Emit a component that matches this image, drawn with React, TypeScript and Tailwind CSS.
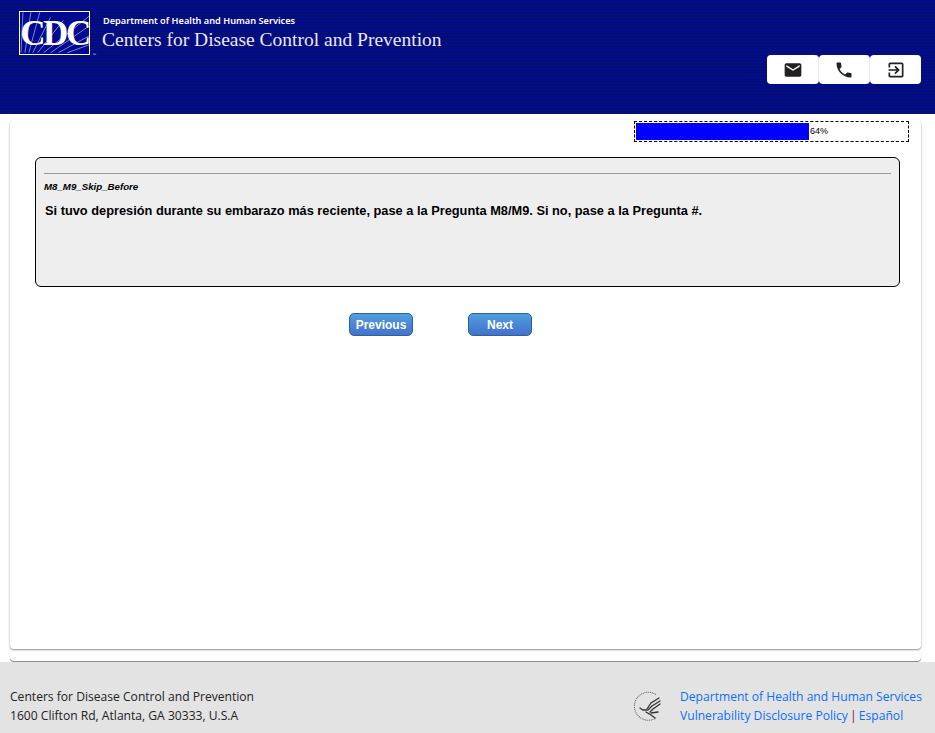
const rays = [
  'M1 41L3 0', 'M5 41L11 0', 'M9 41L20 0', 'M13 41L31 5', 'M18 41L44 8', 'M24 41L70 4', 'M31 41L70 14', 'M39 41L70 24', 'M48 41L70 33',
]

function CdcLogo() {
  return (
    <div className="relative h-[44px] w-[71px] shrink-0 border border-white bg-[#000a90]">
      <svg className="absolute inset-0 h-full w-full" viewBox="0 0 70 42" fill="none" stroke="#b4b8ec" strokeWidth="0.7">
        {rays.map((d) => (
          <path key={d} d={d} />
        ))}
      </svg>
      <span className="absolute inset-0 flex items-center justify-center font-['Liberation_Serif',serif] text-[35px] font-bold leading-none tracking-[-2.5px] text-white">
        CDC
      </span>
      <span className="absolute bottom-[-3px] right-[-7px] font-['Liberation_Sans',sans-serif] text-[4px] leading-none text-[#ccc]">™</span>
    </div>
  )
}

function HhsLogo() {
  return (
    <svg className="h-[32px] w-[32px] shrink-0" viewBox="0 0 32 32" fill="none">
      <path d="M24 4.500A14 14 0 1 0 24 28" stroke="#777" strokeWidth="1.100" strokeDasharray="1.100 0.700" />
      <g stroke="#333" strokeWidth="1.300" strokeLinecap="round">
        <path d="M27 8L19 13L15 19" />
        <path d="M28 11L20 16L16 20" />
        <path d="M28 14L21 19L18 22" />
        <path d="M8 18L11 20L15 20" />
        <path d="M14 22L19 25L23 28" />
        <path d="M19 23L26 22" />
      </g>
    </svg>
  )
}

export default function App() {
  return (
    <div className="flex h-[733px] flex-col overflow-hidden bg-white">
      {/* Header */}
      <header className="flex h-[114px] shrink-0 justify-between bg-[#000a84] bg-[repeating-linear-gradient(180deg,#000a8c_0px,#000a8c_2px,#0a1266_2px,#0a1266_3px)] pl-[19px] pr-[14px]">
        <div className="flex items-start pt-[11px]">
          <CdcLogo />
          <div className="ml-[13px] pt-[4px] text-white">
            <p className="font-['Noto_Sans',sans-serif] text-[9.2px] font-semibold leading-[12px]">Department of Health and Human Services</p>
            <p className="ml-[-1px] mt-[1px] font-['Liberation_Serif',serif] text-[19.5px] leading-[23px] text-[#e8e8f4]">Centers for Disease Control and Prevention</p>
          </div>
        </div>
        <div className="flex pt-[55px]">
          <div className="flex h-[29px]">
            <button className="flex w-[52px] items-center justify-center rounded-[4px] border-r border-[#e8e8e8] bg-white">
              <svg className="h-[20px] w-[20px] fill-[#212121]" viewBox="0 0 24 24">
                <path d="M20 4H4c-1.100 0-2 .9-2 2v12c0 1.100.9 2 2 2h16c1.100 0 2-.9 2-2V6c0-1.100-.9-2-2-2zm0 4l-8 5-8-5V6l8 5 8-5v2z" />
              </svg>
            </button>
            <button className="flex w-[51px] items-center justify-center rounded-[4px] border-r border-[#e8e8e8] bg-white">
              <svg className="h-[20px] w-[20px] fill-[#212121]" viewBox="0 0 24 24">
                <path d="M6.620 10.790c1.440 2.830 3.760 5.140 6.590 6.590l2.200-2.200c.27-.27.67-.36 1.020-.24 1.120.37 2.330.57 3.570.57.550 0 1 .45 1 1V20c0 .55-.45 1-1 1-9.390 0-17-7.610-17-17 0-.55.45-1 1-1h3.500c.55 0 1 .45 1 1 0 1.250.2 2.450.57 3.570.11.350.03.740-.25 1.020l-2.200 2.200z" />
              </svg>
            </button>
            <button className="flex w-[51px] items-center justify-center rounded-[4px] bg-white">
              <svg className="h-[20px] w-[20px] fill-[#212121]" viewBox="0 0 24 24">
                <path d="M10.090 15.590L11.500 17l5-5-5-5-1.410 1.410L12.670 11H3v2h9.670l-2.580 2.590zM19 3H5c-1.110 0-2 .9-2 2v4h2V5h14v14H5v-4H3v4c0 1.100.89 2 2 2h14c1.100 0 2-.9 2-2V5c0-1.100-.9-2-2-2z" />
              </svg>
            </button>
          </div>
        </div>
      </header>

      {/* Main */}
      <main className="flex min-h-0 flex-1 flex-col pl-[10px] pr-[14px] pt-[6px]">
        <div className="h-[529px] shrink-0 rounded-[4px] bg-white pl-[25px] pr-[12px] shadow-[0_1px_2px_rgba(0,0,0,0.45)]">
          <div className="flex justify-end pt-px">
            <div className="flex h-[21px] w-[275px] items-center border border-dashed border-black p-px">
              <div className="h-full w-[173px] bg-[#0000ff]" />
              <span className="ml-px font-['Liberation_Sans',sans-serif] text-[9px] text-black">64%</span>
            </div>
          </div>
          <section className="mr-[9px] mt-[15px] h-[130px] rounded-[6px] border border-black bg-[#eeeeee] px-[8px] pt-[15px] font-['Liberation_Sans',sans-serif]">
            <hr className="border-[#999]" />
            <p className="mt-[6px] text-[9.7px] font-bold italic leading-[13px] text-black">M8_M9_Skip_Before</p>
            <p className="mt-[10px] pl-px text-[12.8px] font-bold leading-[16px] text-black">
              Si tuvo depresión durante su embarazo más reciente, pase a la Pregunta M8/M9. Si no, pase a la Pregunta #.
            </p>
          </section>
          <div className="mr-[9px] mt-[26px] flex justify-center gap-[55px] pr-[54px]">
            <button className="h-[23px] w-[64px] rounded-[5px] border border-[#2a6496] bg-gradient-to-b from-[#4f9fdf] to-[#4470cc] font-['Liberation_Sans',sans-serif] text-[12px] font-bold text-white">
              Previous
            </button>
            <button className="h-[23px] w-[64px] rounded-[5px] border border-[#2a6496] bg-gradient-to-b from-[#4f9fdf] to-[#4470cc] font-['Liberation_Sans',sans-serif] text-[12px] font-bold text-white">
              Next
            </button>
          </div>
        </div>
        <div className="mt-[4px] h-[8px] shrink-0 rounded-b-[4px] bg-white shadow-[0_1px_1px_rgba(0,0,0,0.5)]" />
      </main>

      {/* Footer */}
      <footer className="flex h-[71px] shrink-0 justify-between bg-[#e3e3e3] pl-[10px] pr-[14px] pt-[25px] font-['Open_Sans',sans-serif] text-[12.1px] leading-[19px]">
        <div className="text-[#222]">
          <p>Centers for Disease Control and Prevention</p>
          <p>1600 Clifton Rd, Atlanta, GA 30333, U.S.A</p>
        </div>
        <div className="flex items-center gap-[16px] self-start">
          <HhsLogo />
          <div className="w-[241px] whitespace-nowrap text-[#0d6efd]">
            <p>Department of Health and Human Services</p>
            <p>
              Vulnerability Disclosure Policy <span className="mx-[-1px] text-[#6a1a4a]">|</span> Español
            </p>
          </div>
        </div>
      </footer>
    </div>
  )
}
